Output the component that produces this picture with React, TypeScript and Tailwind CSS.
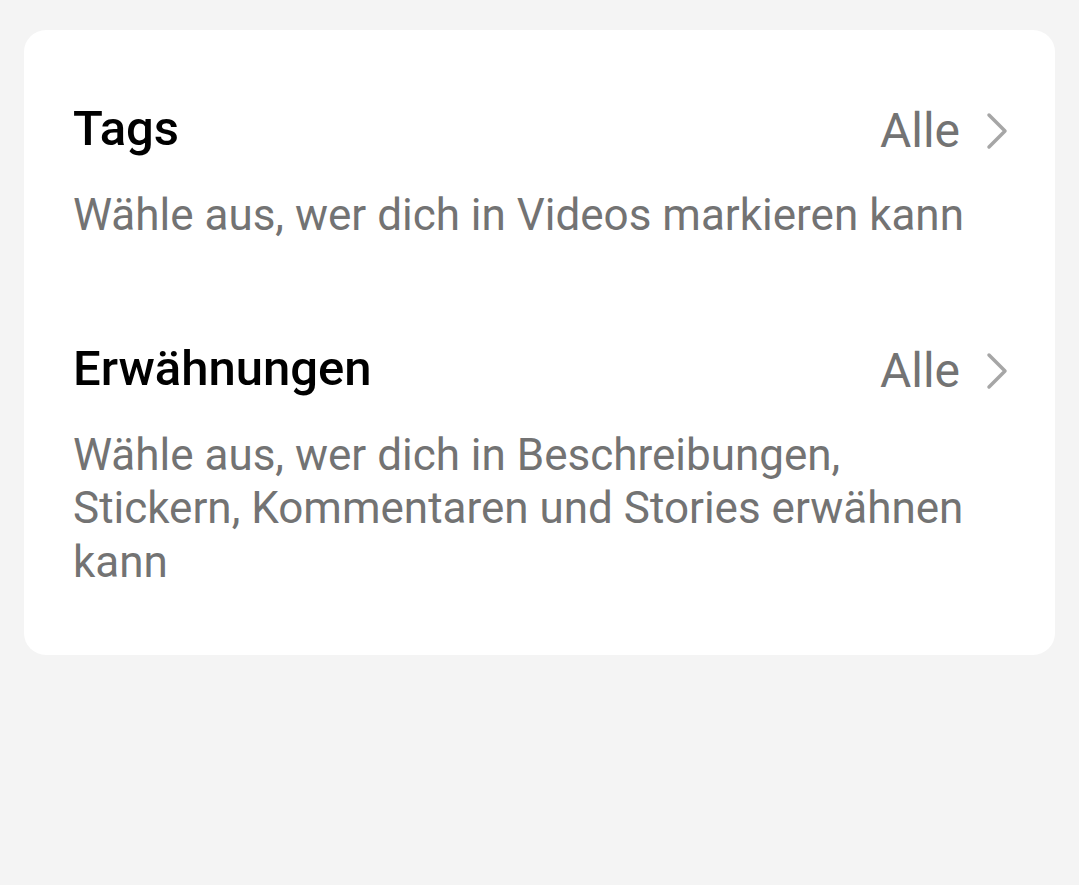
import React from 'react';

function Chevron() {
  return (
    <svg width="22" height="40" viewBox="0 0 22 40" fill="none" className="text-[#a6a6a6]">
      <path d="M3 4 L19 20 L3 36" stroke="currentColor" strokeWidth="3.5" strokeLinecap="round" strokeLinejoin="round" />
    </svg>
  );
}

const rows = [
  { title: 'Tags', value: 'Alle', desc: 'Wähle aus, wer dich in Videos markieren kann' },
  {
    title: 'Erwähnungen',
    value: 'Alle',
    desc: 'Wähle aus, wer dich in Beschreibungen, Stickern, Kommentaren und Stories erwähnen kann',
  },
];

export default function App() {
  return (
    <div className="min-h-[885px] bg-[#f4f4f4] px-6 pt-[30px] font-['Roboto',sans-serif]">
      <div className="bg-white rounded-[22px] pl-[49px] pr-[47px] pt-[67px] pb-[66px] flex flex-col gap-[94px]">
        {rows.map(r => (
          <div key={r.title}>
            <div className="flex items-center justify-between">
              <div className="text-[49px] font-medium text-black leading-[60px]">{r.title}</div>
              <div className="flex items-center gap-[26px] pt-[4px]">
                <span className="text-[48px] text-[#737373] leading-[60px]">{r.value}</span>
                <Chevron />
              </div>
            </div>
            <p className="mt-[28px] text-[44px] leading-[53.5px] text-[#737373] max-w-[910px]">{r.desc}</p>
          </div>
        ))}
      </div>
    </div>
  );
}
